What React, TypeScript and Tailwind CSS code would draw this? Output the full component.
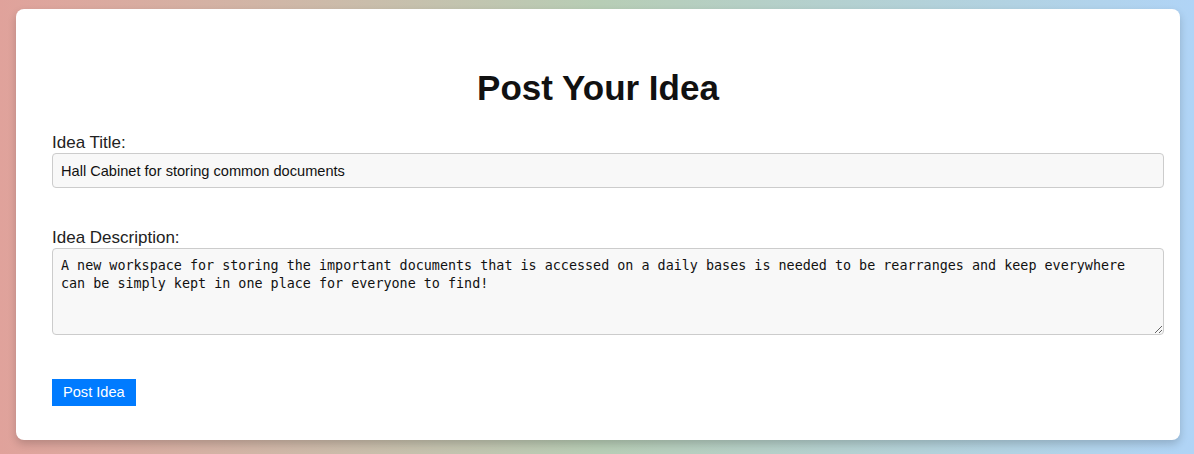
import { useState } from "react";

export default function App() {
  const [title, setTitle] = useState("Hall Cabinet for storing common documents");
  const [description, setDescription] = useState(
    "A new workspace for storing the important documents that is accessed on a daily bases is needed to be rearranges and keep everywhere can be simply kept in one place for everyone to find!"
  );

  return (
    <div
      className="min-h-[454px] pt-[9px] bg-gradient-to-r from-[#e0a29b] via-[#b7cdb5] to-[#b0d4f6]"
      style={{ fontFamily: "'Liberation Sans', Arial, sans-serif" }}
    >
      <div className="w-[1164px] ml-[16px] bg-white rounded-lg shadow-[0_4px_8px_rgba(0,0,0,0.18)] px-[36px] pt-[59px] pb-[34px]">
        <h1 className="text-center text-[35px] leading-[40px] font-bold text-[#111]">
          Post Your Idea
        </h1>

        <form onSubmit={(e) => e.preventDefault()}>
          {/* title */}
          <label className="block mt-[25px] text-[17px] leading-[20px] text-[#222]">
            Idea Title:
          </label>
          <input
            value={title}
            onChange={(e) => setTitle(e.target.value)}
            className="block w-[calc(100%+20px)] h-[35px] px-2 border border-[#cccccc] rounded bg-[#f8f8f8] text-[14.6px] text-[#111] outline-none"
          />

          {/* description */}
          <label className="block mt-[40px] text-[17px] leading-[20px] text-[#222]">
            Idea Description:
          </label>
          <textarea
            value={description}
            onChange={(e) => setDescription(e.target.value)}
            className="block w-[calc(100%+20px)] h-[87px] px-2 py-2 border border-[#cccccc] rounded bg-[#f8f8f8] text-[13.4px] leading-[17.5px] text-[#111] outline-none"
            style={{ fontFamily: "'DejaVu Sans Mono', monospace" }}
          />

          <button
            type="submit"
            className="block mt-[44px] h-[27px] px-[11px] bg-[#007bff] text-white text-[14.6px]"
          >
            Post Idea
          </button>
        </form>
      </div>
    </div>
  );
}
